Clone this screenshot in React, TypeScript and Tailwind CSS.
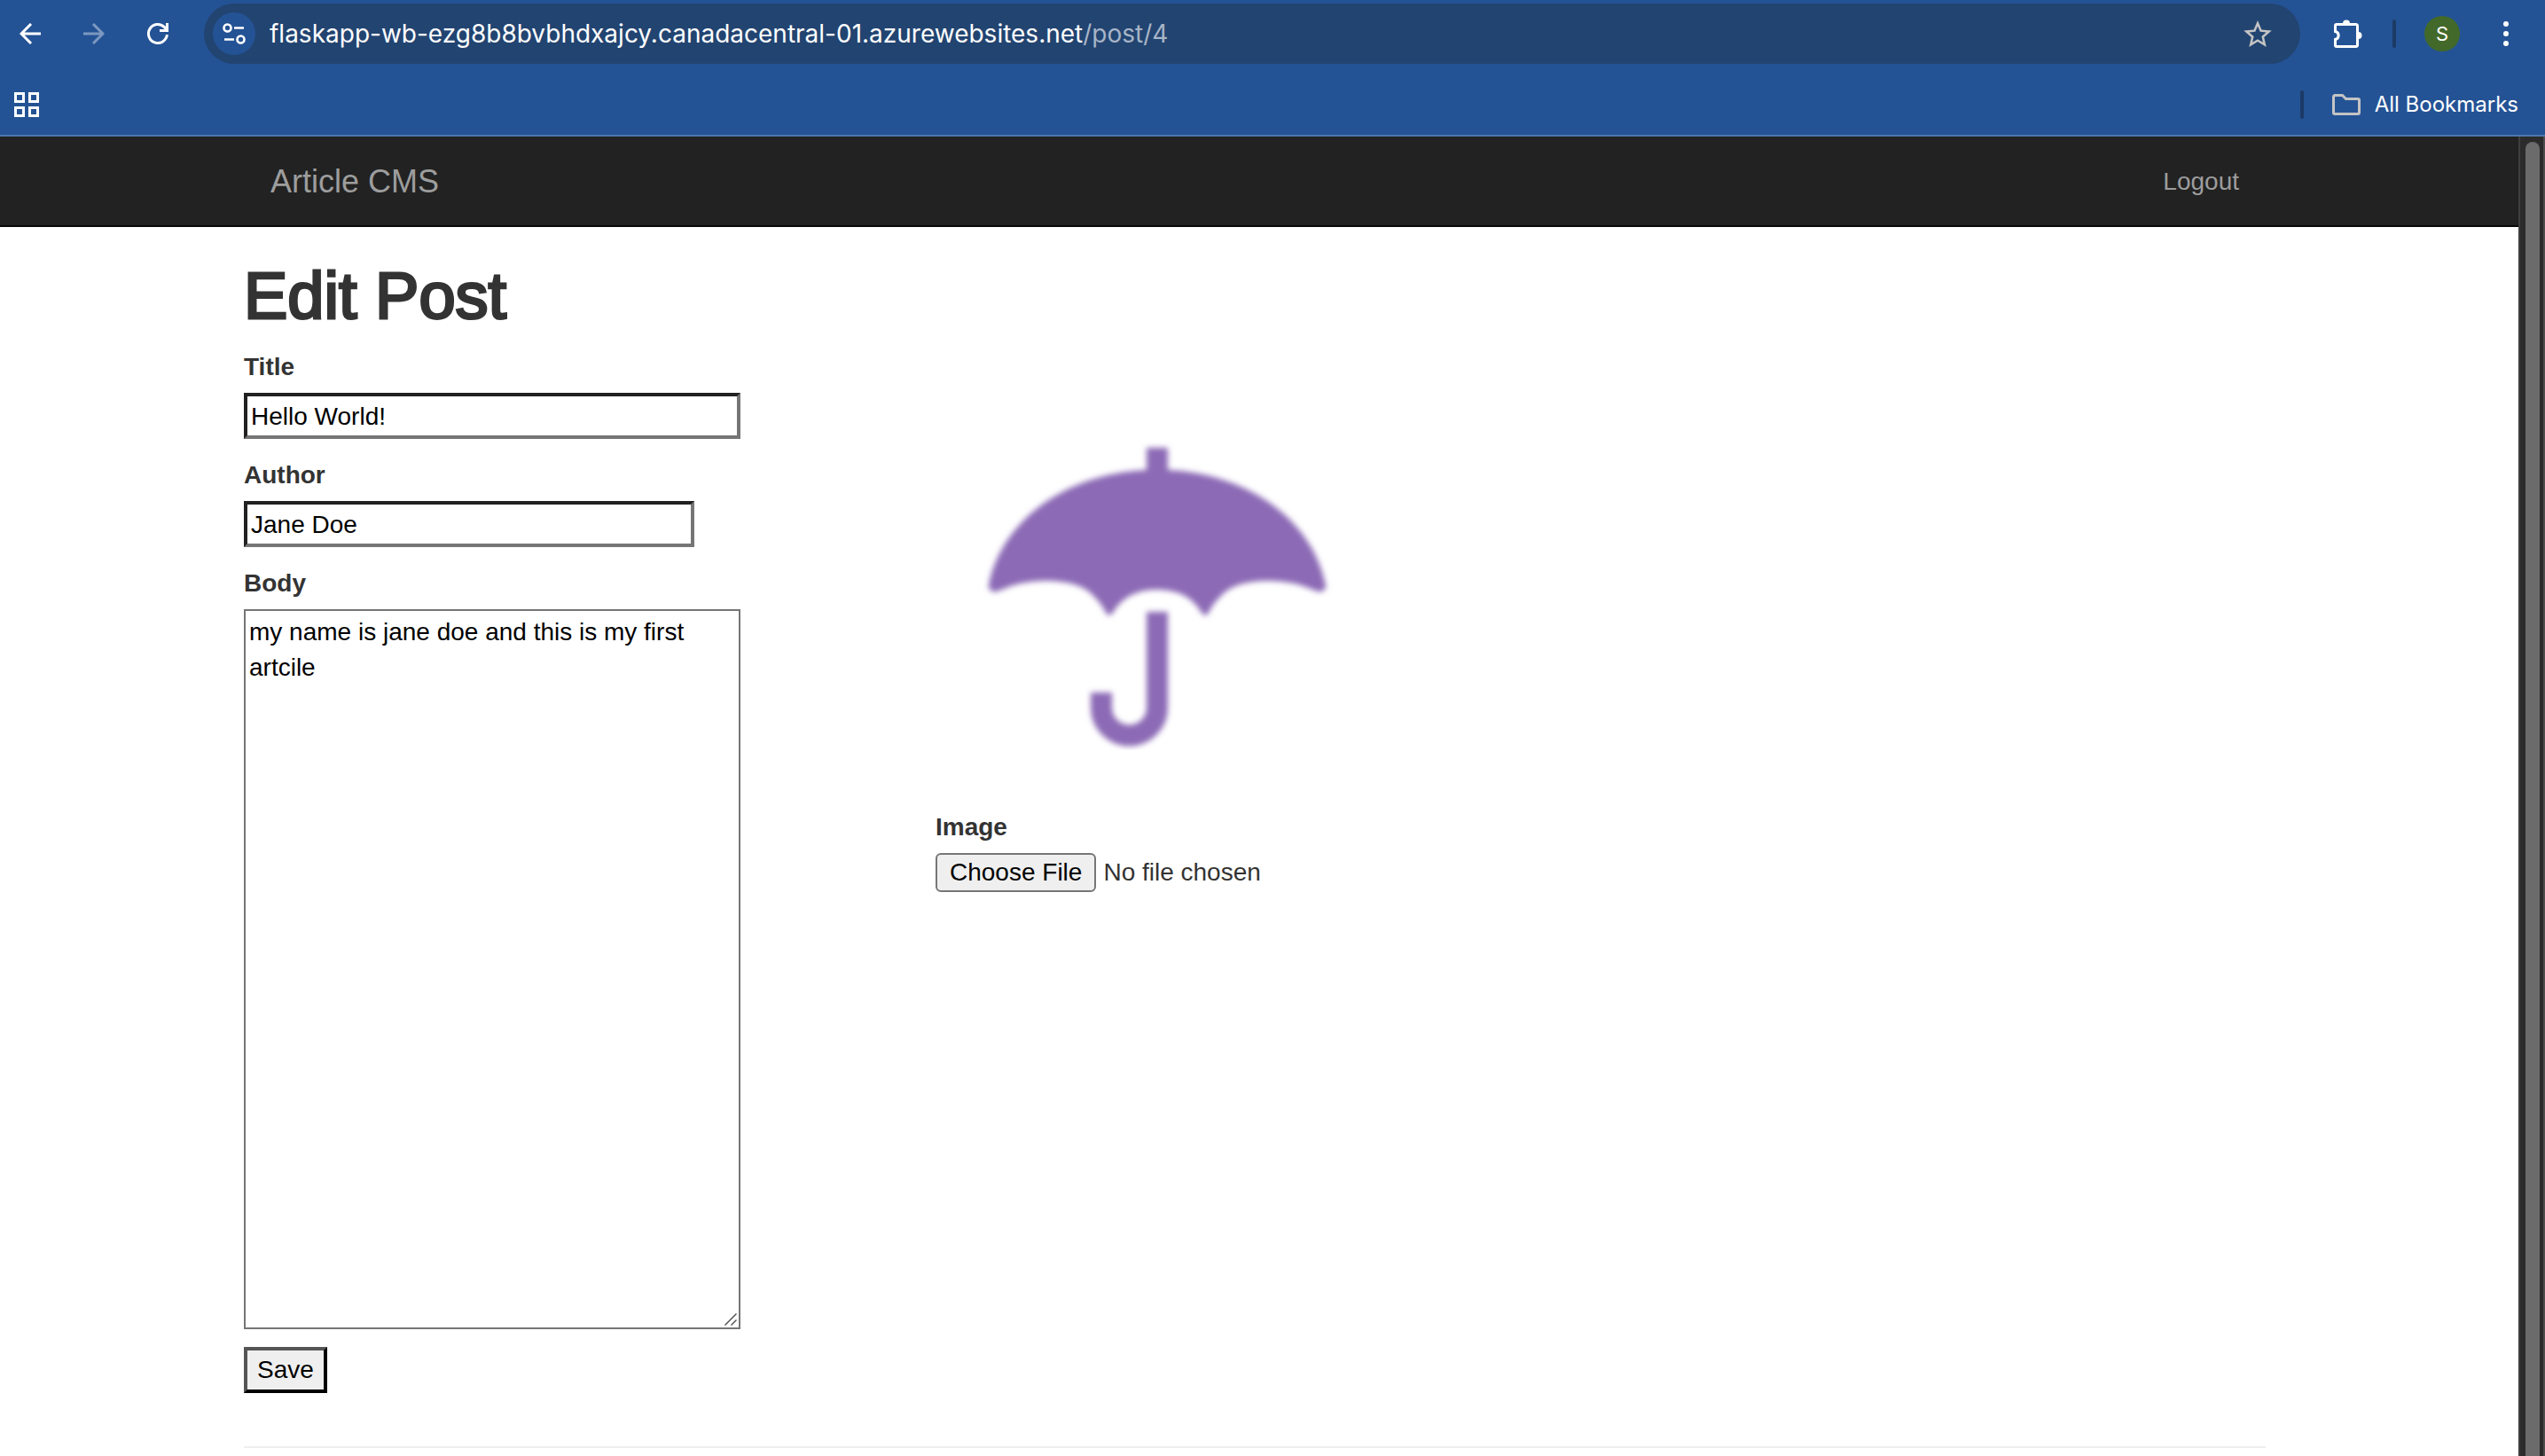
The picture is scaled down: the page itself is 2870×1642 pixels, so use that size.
import React from "react";

function BackIcon() {
  return (
    <svg viewBox="0 0 24 24" className="size-6" fill="none" stroke="currentColor" strokeWidth="3" aria-hidden="true">
      <path d="M24 12H2.5M13 1 2 12l11 11" />
    </svg>
  );
}

function ForwardIcon() {
  return (
    <svg viewBox="0 0 24 24" className="size-6" fill="none" stroke="currentColor" strokeWidth="3" aria-hidden="true">
      <path d="M0 12h21.5M11 1l11 11-11 11" />
    </svg>
  );
}

function ReloadIcon() {
  return (
    <svg viewBox="0 0 24 24" className="size-6" fill="none" stroke="currentColor" strokeWidth="3" aria-hidden="true">
      <path d="M22.4 13.2A10.5 10.5 0 1 1 19.4 4.6L22 7.5" />
      <path d="M22.5 0v8.5H14" />
    </svg>
  );
}

function TuneIcon() {
  return (
    <svg viewBox="0 0 26 24" className="h-6 w-[26px]" fill="none" stroke="currentColor" strokeWidth="2.6" aria-hidden="true">
      <circle cx="5.5" cy="5.5" r="4" />
      <path d="M13 5.500h11M2 18.500h11" />
      <circle cx="20.5" cy="18.5" r="4" />
    </svg>
  );
}

function AppsIcon() {
  return (
    <svg viewBox="0 0 28 28" className="size-7" fill="none" stroke="currentColor" strokeWidth="3" aria-hidden="true">
      <path d="M1.5 1.5h9v9h-9zM17.5 1.5h9v9h-9zM1.5 17.5h9v9h-9zM17.5 17.5h9v9h-9z" />
    </svg>
  );
}

function StarIcon() {
  return (
    <svg viewBox="2 2 20 19" className="h-[30px] w-8" fill="currentColor" aria-hidden="true">
      <path d="M22 9.24l-7.19-.62L12 2 9.19 8.63 2 9.24l5.46 4.73L5.82 21 12 17.27 18.18 21l-1.63-7.03L22 9.24zM12 15.4l-3.76 2.27 1-4.28-3.32-2.88 4.38-.38L12 6.1l1.71 4.04 4.38.38-3.32 2.88 1 4.28L12 15.4z" />
    </svg>
  );
}

function PuzzleIcon() {
  return (
    <svg viewBox="0 0 32 32" className="size-8" aria-hidden="true">
      <path
        d="M3 5.5h22A1.5 1.5 0 0 1 26.5 7v22a1.5 1.5 0 0 1-1.5 1.5H3A1.5 1.5 0 0 1 1.5 29v-6.500a4.600 4.600 0 0 0 0-9V7A1.5 1.5 0 0 1 3 5.500z"
        fill="none"
        stroke="currentColor"
        strokeWidth="3"
      />
      <path d="M10 4.500a4 4 0 0 1 8 0zM27.500 14a4 4 0 0 1 0 8z" fill="currentColor" />
    </svg>
  );
}

function FolderIcon() {
  return (
    <svg viewBox="0 0 32 24" className="h-6 w-8" fill="none" stroke="currentColor" strokeWidth="3" aria-hidden="true">
      <path d="M3 1.500h8.500l4 4H29A1.500 1.500 0 0 1 30.500 7v14a1.500 1.500 0 0 1-1.500 1.500H3A1.500 1.500 0 0 1 1.500 21V3A1.500 1.500 0 0 1 3 1.500z" />
    </svg>
  );
}

function MenuDots() {
  return (
    <svg viewBox="0 0 6 28" className="h-7 w-[6px]" fill="currentColor" aria-hidden="true">
      <circle cx="3" cy="3" r="3" />
      <circle cx="3" cy="14" r="3" />
      <circle cx="3" cy="25" r="3" />
    </svg>
  );
}

function Umbrella() {
  return (
    <svg viewBox="0 0 500 519" className="block h-[519px] w-[500px]" role="img" aria-label="Purple umbrella">
      <defs>
        <filter id="soften" x="-5%" y="-5%" width="110%" height="110%">
          <feGaussianBlur stdDeviation="3" />
        </filter>
      </defs>
      <g filter="url(#soften)" fill="#8c6bb6">
        <path d="M238 112h24v25c92 4 164 58 178 130c1 6-6 9-12 6q-24-11-52-11q-40 0-55 18q-9 9-13 18q-3 6-8 0q-15-26-50-26t-50 26q-5 6-8 0q-4-9-13-18q-15-18-55-18q-28 0-52 11c-6 3-13 0-12-6c14-72 86-126 178-130z" />
        <path d="M250 297v108a31.500 31.500 0 0 1-63 0v-17" fill="none" stroke="#8c6bb6" strokeWidth="24" />
      </g>
    </svg>
  );
}

function ResizeGrip() {
  return (
    <svg
      viewBox="0 0 14 14"
      className="pointer-events-none absolute bottom-1 right-1 size-[14px]"
      fill="none"
      stroke="#555555"
      strokeWidth="1.5"
      aria-hidden="true"
    >
      <path d="M.5 13.500l13-13M7.500 13.500l6-6" />
    </svg>
  );
}

function BrowserChrome() {
  return (
    <header className="border-b-2 border-[#4d78ae] bg-[#245395] pt-1 text-white">
      <div className="flex h-[68px] items-center">
        <div className="flex items-center gap-12 pl-[22px] pr-10">
          <button type="button" aria-label="Back"><BackIcon /></button>
          <button type="button" aria-label="Forward" className="text-[#7c98c0]"><ForwardIcon /></button>
          <button type="button" aria-label="Reload"><ReloadIcon /></button>
        </div>
        <div className="flex h-[68px] flex-1 items-center gap-4 rounded-full bg-[#224471] pl-[10px] pr-8">
          <button type="button" aria-label="View site information" className="flex size-12 items-center justify-center rounded-full bg-[#245395]">
            <TuneIcon />
          </button>
          <div className="flex-1 whitespace-nowrap font-['Inter',sans-serif] text-[28px] leading-10">
            flaskapp-wb-ezg8b8bvbhdxajcy.canadacentral-01.azurewebsites.net<span className="text-[#a7b4c6]">/post/4</span>
          </div>
          <button type="button" aria-label="Bookmark this page" className="text-[#c4c4c4]"><StarIcon /></button>
        </div>
        <div className="flex items-center pl-[38px] pr-[41px]">
          <button type="button" aria-label="Extensions"><PuzzleIcon /></button>
          <span className="ml-[34px] h-8 w-1 rounded-full bg-[#1b3a66]" />
          <button type="button" aria-label="Profile" className="ml-8 size-10 rounded-full bg-[#42692a] font-['Inter',sans-serif] text-[22px] leading-10">S</button>
          <button type="button" aria-label="Menu" className="ml-[49px]"><MenuDots /></button>
        </div>
      </div>
      <div className="flex h-20 items-center justify-between pl-4 pr-[30px] pt-3">
        <button type="button" aria-label="Apps"><AppsIcon /></button>
        <div className="flex items-center">
          <span className="h-8 w-1 rounded-full bg-[#1b3a66]" />
          <button type="button" className="ml-8 flex items-center gap-4 font-['Inter',sans-serif] text-2xl">
            <span className="text-[#c4c4c4]"><FolderIcon /></span>
            All Bookmarks
          </button>
        </div>
      </div>
    </header>
  );
}

function Navbar() {
  return (
    <nav className="border-b-2 border-[#080808] bg-[#222222] pr-[10px] text-[#9d9d9d]">
      <div className="mx-auto flex h-[100px] max-w-[2340px] items-center justify-between px-[60px] pt-[2px]">
        <a href="#home" className="text-4xl leading-10">Article CMS</a>
        <a href="#logout" className="text-[28px] leading-10">Logout</a>
      </div>
    </nav>
  );
}

function Field({ id, label, children }: { id: string; label: string; children: React.ReactNode }) {
  return (
    <div className="mb-5 flex flex-col items-start gap-[9px]">
      <label htmlFor={id} className="pt-px font-bold">{label}</label>
      {children}
    </div>
  );
}

export default function App() {
  return (
    <div className="flex min-h-screen flex-col bg-white font-['Liberation_Sans',Arial,sans-serif] text-[28px] leading-10 text-[#333333]">
      <BrowserChrome />
      <div className="flex flex-1">
        <div className="min-w-0 flex-1">
          <Navbar />
          <main className="pr-[10px]">
            <div className="mx-auto max-w-[2340px] px-[30px] pt-[38px]">
              <h1 className="mb-[19px] text-[74px] leading-[80px] [-webkit-text-stroke:3px_#333333]">Edit Post</h1>
              <form onSubmit={(e) => e.preventDefault()}>
                <div className="grid grid-cols-3">
                  <div>
                    <Field id="title" label="Title">
                      <input
                        id="title"
                        type="text"
                        defaultValue="Hello World!"
                        className="h-[52px] w-[560px] border-4 border-b-[#767676] border-l-[#212121] border-r-[#767676] border-t-[#212121] bg-white px-1 pt-px text-black"
                      />
                    </Field>
                    <Field id="author" label="Author">
                      <input
                        id="author"
                        type="text"
                        defaultValue="Jane Doe"
                        className="h-[52px] w-[508px] border-4 border-b-[#767676] border-l-[#212121] border-r-[#767676] border-t-[#212121] bg-white px-1 pt-px text-black"
                      />
                    </Field>
                    <Field id="body" label="Body">
                      <div className="relative">
                        <textarea
                          id="body"
                          rows={20}
                          defaultValue="my name is jane doe and this is my first artcile"
                          className="block w-[560px] resize-none border-2 border-[#767676] bg-white p-1 text-black"
                        />
                        <ResizeGrip />
                      </div>
                    </Field>
                    <button
                      type="submit"
                      className="block h-[52px] border-4 border-b-black border-l-[#555555] border-r-black border-t-[#555555] bg-[#efefef] px-[11px] leading-10 text-black"
                    >
                      Save
                    </button>
                  </div>
                  <div className="pl-5">
                    <Umbrella />
                    <label htmlFor="image" className="block pt-px font-bold">Image</label>
                    <input
                      id="image"
                      type="file"
                      className="mt-[9px] block file:mr-2 file:h-11 file:rounded-md file:border-2 file:border-solid file:border-[#767676] file:bg-[#efefef] file:px-[14px] file:leading-10 file:text-black"
                    />
                  </div>
                </div>
              </form>
              <hr className="mt-[60px] border-t-2 border-[#eeeeee]" />
            </div>
          </main>
        </div>
        <div className="flex w-[30px] border-l-2 border-r-2 border-l-[#3e3e3e] border-r-[#4d4d4d] bg-[#2b2b2b] pl-[6px] pt-[6px]">
          <div className="w-4 rounded-t-full bg-[#6b6b6b]" />
        </div>
      </div>
    </div>
  );
}
